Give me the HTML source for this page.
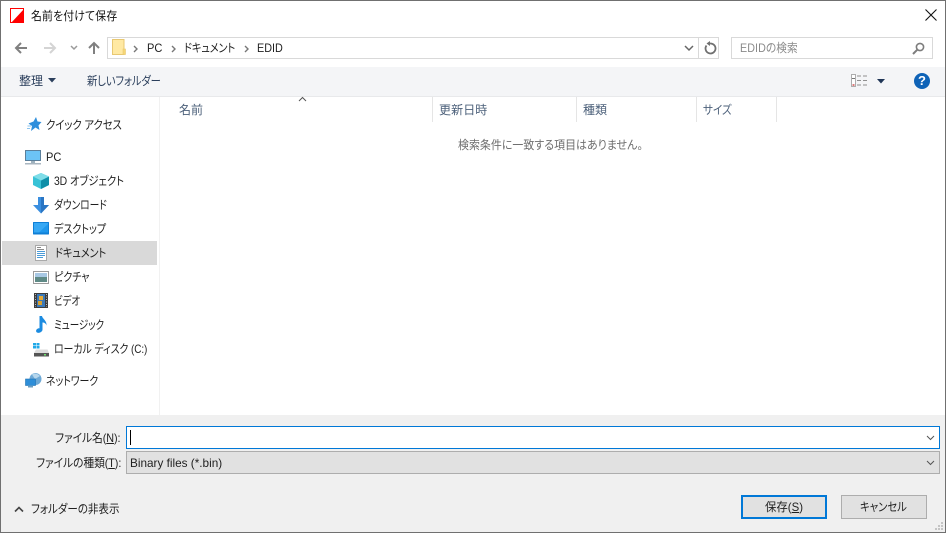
<!DOCTYPE html>
<html lang="ja"><head><meta charset="utf-8">
<style>
html,body{margin:0;padding:0;background:#fff}
body{width:946px;height:533px;position:relative;overflow:hidden;font-family:"Liberation Sans","Noto Sans CJK JP",sans-serif;font-size:12px;color:#1a1a1a}
.t{position:absolute;white-space:nowrap;line-height:16px;height:16px;font-feature-settings:"palt";font-family:"Liberation Sans","Noto Sans CJK JP",sans-serif;transform-origin:0 0}
.b{position:absolute;box-sizing:border-box}
svg{position:absolute;overflow:visible}
.n{color:#1f1f1f}
.h{color:#4c607a}
u{text-underline-offset:1px}
</style></head><body>
<!-- panels -->
<div class="b" style="left:1px;top:67px;width:944px;height:29px;background:#f4f5f7"></div>
<div class="b" style="left:1px;top:96px;width:944px;height:1px;background:#e8e9eb"></div>
<div class="b" style="left:159px;top:97px;width:1px;height:318px;background:#f1f1f1"></div>
<div class="b" style="left:2px;top:241px;width:155px;height:24px;background:#d9d9d9"></div>
<div class="b" style="left:1px;top:415px;width:944px;height:117px;background:#f0f0f0"></div>

<!-- window border -->
<div class="b" style="left:0;top:0;width:946px;height:533px;border:1px solid #707070"></div>

<!-- title -->
<svg style="left:10px;top:8px" width="14" height="15" viewBox="0 0 14 15"><rect x=".5" y=".5" width="13" height="14" fill="#fff" stroke="#f00" stroke-width="1"/><path d="M14 1L1 15H14Z" fill="#f00"/></svg>
<div class="t" style="left:31px;top:8px;letter-spacing:.2px;color:#111;transform:scaleX(.905)">名前を付けて保存</div>
<svg style="left:925px;top:9px" width="12" height="12"><path d="M.5.5L11.5 11.5M11.5.5L.5 11.5" stroke="#111" stroke-width="1.1" fill="none"/></svg>

<!-- nav -->
<svg style="left:14px;top:41px" width="14" height="14"><path d="M13 7H2M7 2L2 7L7 12" stroke="#808080" stroke-width="2" fill="none"/></svg>
<svg style="left:43px;top:41px" width="14" height="14"><path d="M1 7H12M7 2L12 7L7 12" stroke="#d4d4d4" stroke-width="2" fill="none"/></svg>
<svg style="left:70px;top:45px" width="8" height="6"><path d="M1 1L4 4L7 1" stroke="#9a9a9a" stroke-width="1.5" fill="none"/></svg>
<svg style="left:87px;top:41px" width="14" height="14"><path d="M7 13V2M2 7L7 2L12 7" stroke="#808080" stroke-width="2" fill="none"/></svg>

<!-- address bar -->
<div class="b" style="left:107px;top:37px;width:612px;height:22px;background:#fff;border:1px solid #d9d9d9"></div>
<div class="b" style="left:698px;top:37px;width:1px;height:22px;background:#d9d9d9"></div>
<svg style="left:112px;top:39px" width="14" height="16"><rect x=".5" y=".5" width="11.5" height="15" fill="#ffe9a3" stroke="#e8c872"/><rect x="11" y="10" width="2.5" height="5.5" fill="#f6d776" stroke="#e8c872" stroke-width=".6"/></svg>
<svg style="left:133px;top:45px" width="6" height="8"><path d="M1 1L4 4L1 7" stroke="#777" stroke-width="1.4" fill="none"/></svg>
<div class="t n" style="left:147px;top:40px;transform:scaleX(.92)">PC</div>
<svg style="left:171px;top:45px" width="6" height="8"><path d="M1 1L4 4L1 7" stroke="#777" stroke-width="1.4" fill="none"/></svg>
<div class="t n" style="left:184px;top:40px;letter-spacing:-.2px;transform:scaleX(.85)">ドキュメント</div>
<svg style="left:244px;top:45px" width="6" height="8"><path d="M1 1L4 4L1 7" stroke="#777" stroke-width="1.4" fill="none"/></svg>
<div class="t n" style="left:257px;top:40px;transform:scaleX(.9)">EDID</div>
<svg style="left:684px;top:45px" width="10" height="7"><path d="M1 1L5 5L9 1" stroke="#666" stroke-width="1.5" fill="none"/></svg>
<svg style="left:703px;top:41px" width="14" height="14" viewBox="0 0 14 14"><path d="M3.5 4.5A5 5 0 1 0 7 2.5" stroke="#707070" stroke-width="1.8" fill="none"/><path d="M7 0V5L3.5 2.5Z" fill="#707070"/></svg>

<!-- search -->
<div class="b" style="left:731px;top:37px;width:202px;height:22px;background:#fff;border:1px solid #d9d9d9"></div>
<div class="t" style="left:740px;top:40px;color:#8a8a8a;letter-spacing:.1px;transform:scaleX(.89)">EDIDの検索</div>
<svg style="left:912px;top:42px" width="13" height="13"><circle cx="8" cy="5" r="3.6" fill="none" stroke="#7d7d7d" stroke-width="1.6"/><path d="M5.3 7.7L1 12" stroke="#7d7d7d" stroke-width="2"/></svg>

<!-- toolbar -->
<div class="t h" style="left:19px;top:73px;color:#2b3f5c">整理</div>
<svg style="left:48px;top:78px" width="9" height="5"><path d="M0 0H8L4 4.5Z" fill="#2b3f5c"/></svg>
<div class="t h" style="left:87px;top:73px;letter-spacing:-.15px;color:#2b3f5c;transform:scaleX(.86)">新しいフォルダー</div>
<svg style="left:851px;top:74px" width="17" height="14"><rect x=".5" y=".5" width="4" height="12" fill="#fff" stroke="#9a9a9a" stroke-width=".8"/><path d="M1 4.5H4" stroke="#777"/><path d="M1.5 11H3.5" stroke="#c44" stroke-width="1.4"/><path d="M6 2H10M12 2H16M6 6.500H10M12 6.500H16M6 11H10M12 11H16" stroke="#8f8f8f" stroke-width="1"/></svg>
<svg style="left:877px;top:79px" width="8" height="5"><path d="M0 0H8L4 4.500Z" fill="#1f3556"/></svg>
<svg style="left:914px;top:73px" width="16" height="16"><circle cx="8" cy="8" r="8" fill="#0f63b7"/></svg>
<div class="t" style="left:914px;top:73px;width:16px;text-align:center;color:#fff;font-weight:bold;font-size:13px">?</div>

<!-- column header -->
<svg style="left:298px;top:96px" width="9" height="6"><path d="M1 5L4.500 1.500L8 5" stroke="#555" stroke-width="1" fill="none"/></svg>
<div class="t h" style="left:179px;top:102px">名前</div>
<div class="b" style="left:432px;top:97px;width:1px;height:25px;background:#e5e5e5"></div>
<div class="t h" style="left:439px;top:102px;letter-spacing:.1px">更新日時</div>
<div class="b" style="left:576px;top:97px;width:1px;height:25px;background:#e5e5e5"></div>
<div class="t h" style="left:583px;top:102px">種類</div>
<div class="b" style="left:696px;top:97px;width:1px;height:25px;background:#e5e5e5"></div>
<div class="t h" style="left:703px;top:102px;transform:scaleX(.88)">サイズ</div>
<div class="b" style="left:776px;top:97px;width:1px;height:25px;background:#e5e5e5"></div>
<div class="t" style="left:458px;top:137px;color:#6d6d6d;letter-spacing:.05px;transform:scaleX(.91)">検索条件に一致する項目はありません。</div>

<!-- sidebar -->
<svg style="left:26px;top:116px" width="16" height="16" viewBox="0 0 16 16"><path d="M10 1L11.500 5.500L15.500 6L12.500 9.500L13.500 14L9.500 11.500L5 15L6 10L2.500 7.500L7.500 5.500Z" fill="#2f8fdc"/><path d="M1.500 10H5M1 12.500H4" stroke="#8cc4ee"/></svg>
<div class="t n" style="left:46px;top:117px;letter-spacing:-.1px;transform:scaleX(.865)">クイック アクセス</div>

<svg style="left:25px;top:150px" width="16" height="15" viewBox="0 0 16 15"><rect x=".5" y=".5" width="15" height="10" fill="#6cc3f5" stroke="#5a7f9b"/><rect x="6" y="11" width="4" height="2" fill="#9fb2bf"/><rect x="0" y="13" width="16" height="1.500" fill="#a9b6c0"/></svg>
<div class="t n" style="left:46px;top:149px;transform:scaleX(.92)">PC</div>

<svg style="left:33px;top:173px" width="16" height="16" viewBox="0 0 16 16"><path d="M8 0L16 3.500V12L8 16L0 12V3.500Z" fill="#38c2d6"/><path d="M8 7.500L16 3.500V12L8 16Z" fill="#0f8fa8"/><path d="M8 0L16 3.500L8 7.500L0 3.500Z" fill="#7fdde8"/></svg>
<div class="t n" style="left:54px;top:173px;letter-spacing:-.1px;transform:scaleX(.865)">3D オブジェクト</div>

<svg style="left:33px;top:197px" width="16" height="17" viewBox="0 0 16 17"><path d="M5 0H11V8H16L8 16.500L0 8H5Z" fill="#3a8fe0"/><path d="M8 0H11V8H16L8 16.500Z" fill="#2a76c4"/></svg>
<div class="t n" style="left:54px;top:197px;letter-spacing:-.1px;transform:scaleX(.815)">ダウンロード</div>

<svg style="left:33px;top:222px" width="16" height="13" viewBox="0 0 16 13"><rect x="0" y="0" width="16" height="12.500" rx=".5" fill="#0f7fd6"/><rect x="1" y="1" width="14" height="9.500" fill="#37a8f4"/><path d="M6 10.500L15 2V10.500Z" fill="#1f97ec"/></svg>
<div class="t n" style="left:54px;top:221px;letter-spacing:-.1px;transform:scaleX(.84)">デスクトップ</div>

<svg style="left:35px;top:245px" width="12" height="16" viewBox="0 0 12 16"><rect x=".5" y=".5" width="11" height="15" fill="#fff" stroke="#a9a9a9"/><path d="M2 2.500H6M2 4.500H9" stroke="#8a8a8a"/><path d="M2 6.500H10M2 8.500H10M2 10.500H10M2 12.500H8" stroke="#4a9bd8"/></svg>
<div class="t n" style="left:54.500px;top:245px;letter-spacing:-.2px;transform:scaleX(.85)">ドキュメント</div>

<svg style="left:33px;top:271px" width="16" height="13" viewBox="0 0 16 13"><rect x=".5" y=".5" width="15" height="12" fill="#fff" stroke="#9c9c9c"/><rect x="2" y="2" width="12" height="4" fill="#a8c8e4"/><rect x="2" y="6" width="12" height="5" fill="#5f8a86"/></svg>
<div class="t n" style="left:54px;top:269px;letter-spacing:-.1px;transform:scaleX(.84)">ピクチャ</div>

<svg style="left:34px;top:293px" width="14" height="15" viewBox="0 0 14 15"><rect width="14" height="15" fill="#3d3d3d"/><rect x="3" y="1" width="8" height="13" fill="#3a78b8"/><rect x="5" y="3" width="4" height="4" fill="#e5a834"/><rect x="4" y="8" width="4" height="4" fill="#d9a02e"/><path d="M1.500 1V14M12.500 1V14" stroke="#bbb" stroke-dasharray="1 1.500"/></svg>
<div class="t n" style="left:54px;top:293px;letter-spacing:-.1px;transform:scaleX(.79)">ビデオ</div>

<svg style="left:36px;top:316px" width="11" height="17" viewBox="0 0 11 17"><path d="M3.500 0H6C6.500 3 11 4.500 10.500 9.500C9.800 7 8 6.500 6.500 6.500V13.500C6.500 16 3 17.500 1 16.500C-.5 15.500 0 13.500 1.500 12.700C2.200 12.300 3 12.200 3.500 12.400Z" fill="#1b8be0"/></svg>
<div class="t n" style="left:54px;top:317px;letter-spacing:-.1px;transform:scaleX(.795)">ミュージック</div>

<svg style="left:33px;top:343px" width="16" height="14" viewBox="0 0 16 14"><path d="M0 0H3V2.500H0ZM3.500 0H6.500V2.500H3.500ZM0 3H3V5.500H0ZM3.500 3H6.500V5.500H3.500Z" fill="#21a9e8"/><path d="M3 6.500L14.500 6.500L16 10H1Z" fill="#dcdcdc"/><rect x="1" y="10" width="15" height="3.500" fill="#555"/><rect x="11" y="11" width="2" height="1.500" fill="#6fe06f"/></svg>
<div class="t n" style="left:54px;top:341px;letter-spacing:-.1px;transform:scaleX(.83)">ローカル ディスク (C:)</div>

<svg style="left:25px;top:373px" width="17" height="15" viewBox="0 0 17 15"><circle cx="10.500" cy="6" r="6" fill="#6ea9d6"/><path d="M7 1.500C9 0 13 .5 15 3L10 6Z" fill="#b6d6ec"/><rect x=".5" y="6" width="10" height="6.500" fill="#2e8ed8" stroke="#1f72b4" stroke-width=".6"/><rect x="3" y="13" width="5" height="1.500" fill="#6a9cc0"/></svg>
<div class="t n" style="left:46px;top:373px;letter-spacing:-.1px;transform:scaleX(.83)">ネットワーク</div>

<!-- bottom form -->
<div class="t n" style="left:55px;top:430px;letter-spacing:-.1px;transform:scaleX(.9)">ファイル名(<u>N</u>):</div>
<div class="b" style="left:126px;top:426px;width:814px;height:23px;background:#fff;border:1px solid #0078d7"></div>
<div class="b" style="left:130px;top:430px;width:1px;height:15px;background:#000"></div>
<svg style="left:926px;top:435px" width="10" height="6"><path d="M1 1L4.500 4.500L8 1" stroke="#555" stroke-width="1" fill="none"/></svg>

<div class="t n" style="left:36px;top:455px;letter-spacing:-.1px;transform:scaleX(.9)">ファイルの種類(<u>T</u>):</div>
<div class="b" style="left:126px;top:451px;width:814px;height:23px;background:#e1e1e1;border:1px solid #adadad"></div>
<div class="t n" style="left:130px;top:455px;transform:scaleX(.98)">Binary files (*.bin)</div>
<svg style="left:926px;top:460px" width="10" height="6"><path d="M1 1L4.500 4.500L8 1" stroke="#555" stroke-width="1" fill="none"/></svg>

<svg style="left:14px;top:506px" width="10" height="7"><path d="M1 5.500L5 1.500L9 5.500" stroke="#444" stroke-width="1.600" fill="none"/></svg>
<div class="t n" style="left:31px;top:501px;letter-spacing:-.05px;transform:scaleX(.88)">フォルダーの非表示</div>

<div class="b" style="left:741px;top:495px;width:86px;height:24px;background:#e1e1e1;border:2px solid #0078d7"></div>
<div class="t n" style="left:765px;top:499px;transform:scaleX(.95)">保存(<u>S</u>)</div>
<div class="b" style="left:841px;top:495px;width:86px;height:24px;background:#e1e1e1;border:1px solid #adadad"></div>
<div class="t n" style="left:860px;top:499px;letter-spacing:-.1px;transform:scaleX(.87)">キャンセル</div>
<svg style="left:934px;top:521px" width="10" height="10"><path d="M7 1h2v2H7zM4 4h2v2H4zM7 4h2v2H7zM1 7h2v2H1zM4 7h2v2H4zM7 7h2v2H7z" fill="#c4c4c4"/></svg>
</body></html>
